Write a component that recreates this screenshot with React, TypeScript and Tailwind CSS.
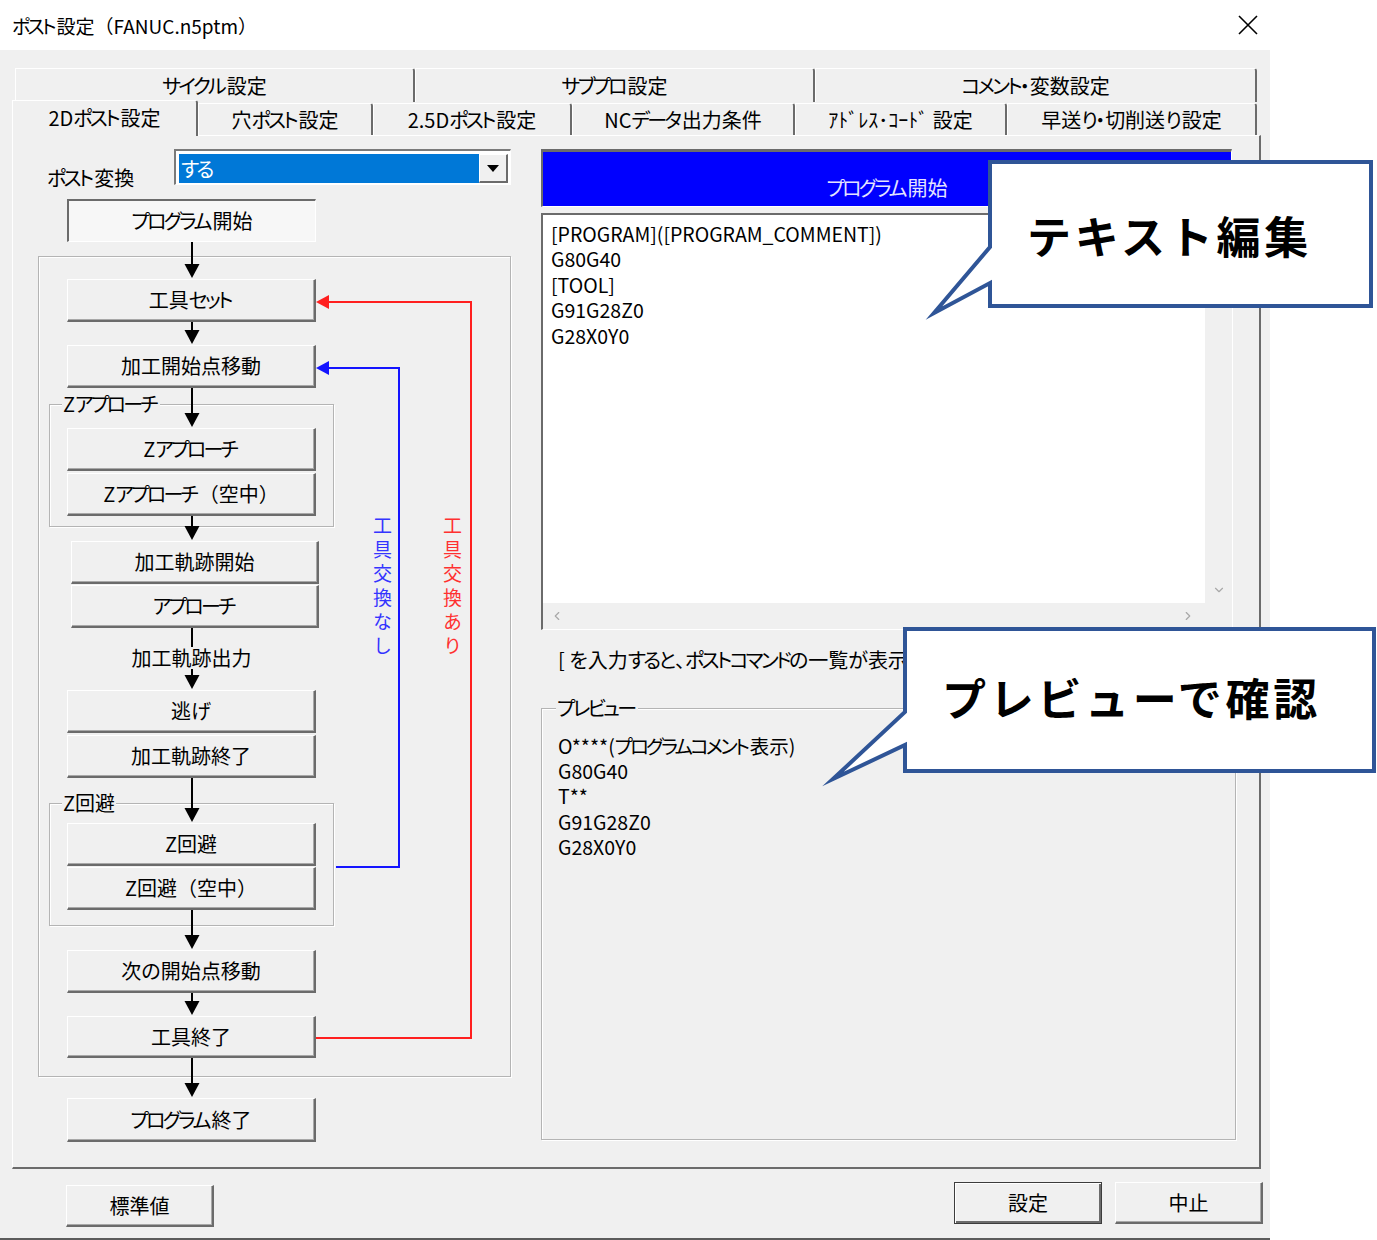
import React from "react";
import { ChevronDown, ChevronLeft, ChevronRight, ChevronUp } from "lucide-react";

/* Narrow the kana runs a little, as the Windows UI font draws them */
function J({ t }: { t: string }) {
  const parts = t.split(/([\u3040-\u30ff]+)/);
  return (
    <>
      {parts.map((p, i) =>
        /^[\u3040-\u30ff]+$/.test(p) ? (
          <span key={i}>
            <span className="tracking-[-2.75px]">{p.slice(0, -1)}</span>
            {p.slice(-1)}
          </span>
        ) : p.includes("（") ? (
          <span key={i} className="[font-feature-settings:normal]">
            {p}
          </span>
        ) : (
          <span key={i}>{p}</span>
        )
      )}
    </>
  );
}

const btnBase =
  "flex items-center justify-center shrink-0 bg-[#f0f0f0] border-t border-l border-t-white border-l-white border-r-2 border-b-2 border-r-[#6b6b6b] border-b-[#6b6b6b] shadow-[inset_-1px_-1px_0_#a8a8a8] text-[20px] leading-none text-black whitespace-nowrap";

function Btn({ className = "", t }: { className?: string; t: string }) {
  return (
    <div className={`${btnBase} ${className}`}>
      <J t={t} />
    </div>
  );
}

function Arrow({ h, className = "" }: { h: number; className?: string }) {
  return (
    <svg width={16} height={h} viewBox={`0 0 16 ${h}`} className={`relative block shrink-0 ${className}`}>
      <rect x={7} y={0} width={2} height={h - 8} fill="#000" />
      <polygon points={`0.5,${h - 15} 15.5,${h - 15} 8,${h - 1}`} fill="#000" />
    </svg>
  );
}

function VLine({ className }: { className: string }) {
  return <div className={`relative w-[2px] bg-black ${className}`} />;
}

function Group({
  label,
  className,
  labelClass,
  children,
}: {
  label: string;
  className: string;
  labelClass: string;
  children: React.ReactNode;
}) {
  return (
    <div className={`relative border border-[#b4b4b4] shadow-[inset_1px_1px_0_#fff,1px_1px_0_#fff] ${className}`}>
      <span className={`absolute -top-[12px] bg-[#f0f0f0] px-[1px] text-[20px] leading-[22px] text-black whitespace-nowrap ${labelClass}`}>
        <J t={label} />
      </span>
      {children}
    </div>
  );
}

const tabBase =
  "flex items-center justify-center shrink-0 bg-[#f0f0f0] border-t border-l border-t-white border-l-white border-r-2 border-r-[#6b6b6b] rounded-tr-[3px] text-[20px] leading-none text-black whitespace-nowrap";

function LeftColumn() {
  return (
    <div className="relative w-[473px] shrink-0 mt-[13px] ml-[25px]">
      {/* post conversion row */}
      <div className="flex items-start h-[36px]">
        <span className="ml-[9px] mt-[18px] text-[20px] leading-[22px]">
          <J t="ポスト変換" />
        </span>
        <div className="ml-auto w-[337px] h-[36px] border-t-2 border-l-2 border-t-[#7a7a7a] border-l-[#7a7a7a] border-b border-r border-b-white border-r-white bg-white pt-[3px] pb-[1px] pl-[3px] pr-[2px] flex">
          <div className="flex-1 bg-[#0078d7] text-white text-[20px] leading-[29px] pl-[2px]">
            <J t="する" />
          </div>
          <div className="w-[29px] h-[29px] flex items-center justify-center bg-[#f0f0f0] border-t border-l border-t-white border-l-white border-r-2 border-b-2 border-r-[#6b6b6b] border-b-[#6b6b6b]">
            <svg width="12" height="7" viewBox="0 0 12 7">
              <polygon points="0,0 12,0 6,7" fill="#000" />
            </svg>
          </div>
        </div>
      </div>

      <div className="ml-[29px] mt-[14px] w-[249px] h-[43px] flex items-center justify-center bg-[#f7f7f7] border-t-2 border-l-2 border-t-[#6b6b6b] border-l-[#6b6b6b] border-b border-r border-b-white border-r-white text-[20px] leading-none">
        <J t="プログラム開始" />
      </div>
      <VLine className="ml-[153px] h-[14px]" />

      <Group label="" labelClass="hidden" className="w-[473px]">
        <Arrow h={23} className="-mt-px ml-[145px]" />
        <Btn className="ml-[28px] w-[249px] h-[43px]" t="工具セット" />
        <Arrow h={23} className="ml-[145px]" />
        <Btn className="ml-[28px] w-[249px] h-[43px]" t="加工開始点移動" />
        <VLine className="ml-[152px] h-[16px]" />

        <Group label="Zアプローチ" labelClass="left-[12px]" className="ml-[10px] w-[285px]">
          <Arrow h={24} className="-mt-px ml-[134px]" />
          <Btn className="ml-[17px] w-[249px] h-[43px]" t="Zアプローチ" />
          <Btn className="ml-[17px] mt-[2px] w-[249px] h-[43px]" t="Zアプローチ（空中）" />
          <VLine className="ml-[141px] h-[10px]" />
        </Group>

        <Arrow h={15} className="-mt-px ml-[145px]" />
        <Btn className="ml-[32px] w-[248px] h-[43px]" t="加工軌跡開始" />
        <Btn className="ml-[32px] mt-[1px] w-[248px] h-[43px]" t="アプローチ" />
        <VLine className="ml-[152px] h-[19px]" />
        <div className="ml-[28px] w-[249px] h-[22px] text-center text-[20px] leading-[22px]">加工軌跡出力</div>
        <Arrow h={21} className="ml-[145px]" />
        <Btn className="ml-[28px] w-[249px] h-[43px]" t="逃げ" />
        <Btn className="ml-[28px] mt-[2px] w-[249px] h-[43px]" t="加工軌跡終了" />
        <VLine className="ml-[152px] h-[25px]" />

        <Group label="Z回避" labelClass="left-[12px]" className="ml-[10px] w-[285px]">
          <Arrow h={20} className="-mt-px ml-[134px]" />
          <Btn className="ml-[17px] w-[249px] h-[43px]" t="Z回避" />
          <Btn className="ml-[17px] mt-[1px] w-[249px] h-[43px]" t="Z回避（空中）" />
          <VLine className="ml-[141px] h-[15px]" />
        </Group>

        <Arrow h={25} className="-mt-px ml-[145px]" />
        <Btn className="ml-[28px] w-[249px] h-[43px]" t="次の開始点移動" />
        <Arrow h={23} className="ml-[145px]" />
        <Btn className="ml-[28px] w-[249px] h-[42px]" t="工具終了" />
        <VLine className="ml-[152px] h-[18px]" />
      </Group>

      <Arrow h={22} className="-mt-px ml-[146px]" />
      <Btn className="ml-[29px] w-[249px] h-[44px]" t="プログラム終了" />

      {/* loop lines (diagram overlay) */}
      <svg className="absolute left-0 top-0 pointer-events-none" width="473" height="1000" viewBox="0 0 473 1000">
        <path d="M278 889 H433 V153 H290" fill="none" stroke="#ff1f1f" strokeWidth="2" />
        <polygon points="278,153 291,146 291,160" fill="#ff1f1f" />
        <path d="M298 718 H361 V219 H290" fill="none" stroke="#1414ff" strokeWidth="2" />
        <polygon points="278,219 291,212 291,226" fill="#1414ff" />
      </svg>
      <div className="absolute left-[334px] top-[367px] [writing-mode:vertical-rl] [text-orientation:upright] text-[19px] leading-[20px] tracking-[5px] text-[#3434ff]">
        工具交換なし
      </div>
      <div className="absolute left-[404px] top-[367px] [writing-mode:vertical-rl] [text-orientation:upright] text-[19px] leading-[20px] tracking-[5px] text-[#ff3030]">
        工具交換あり
      </div>
    </div>
  );
}

function RightColumn() {
  return (
    <div className="w-[695px] shrink-0 mt-[13px] ml-[30px] flex flex-col">
      <div className="w-[691px] h-[58px] border-t-[3px] border-l-2 border-t-[#6b6b6b] border-l-[#6b6b6b] border-b border-r border-b-white border-r-white bg-[#0000ff] flex items-end justify-center pb-[7px]">
        <span className="text-[20px] leading-[22px] text-[#e4e4ff]">
          <J t="プログラム開始" />
        </span>
      </div>

      <div className="mt-[6px] w-[692px] h-[417px] border-t-2 border-l-2 border-t-[#6b6b6b] border-l-[#6b6b6b] border-b border-r border-b-white border-r-white bg-white flex flex-col">
        <div className="flex flex-1 min-h-0">
          <div className="flex-1 pl-[8px] pt-[6px] text-[19.5px] leading-[25.4px] text-black">
            <div>[PROGRAM]([PROGRAM_COMMENT])</div>
            <div>G80G40</div>
            <div>[TOOL]</div>
            <div>G91G28Z0</div>
            <div>G28X0Y0</div>
          </div>
          <div className="w-[27px] bg-[#f0f0f0] flex flex-col justify-between items-center">
            <div className="h-[26px] flex items-center">
              <ChevronUp size={14} strokeWidth={2} color="#a8a8a8" />
            </div>
            <div className="h-[26px] flex items-center">
              <ChevronDown size={14} strokeWidth={2} color="#a8a8a8" />
            </div>
          </div>
        </div>
        <div className="h-[26px] flex bg-[#f0f0f0]">
          <div className="flex-1 flex items-center justify-between pl-[7px] pr-[10px]">
            <ChevronLeft size={14} strokeWidth={2} color="#a8a8a8" />
            <ChevronRight size={14} strokeWidth={2} color="#a8a8a8" />
          </div>
          <div className="w-[27px]" />
        </div>
      </div>

      {/* hint line: its end lies under the callout, as in the screenshot */}
      <div className="mt-[18px] pl-[17px] h-[24px] text-[20px] leading-[24px] whitespace-nowrap">
        <J t="[ を入力すると、ポストコマンドの一覧が表示されます。" />
      </div>

      <Group label="プレビュー" labelClass="left-[14px]" className="mt-[36px] w-[695px] h-[432px]">
        <div className="pl-[16px] pt-[24px] text-[19.5px] leading-[25.2px] text-black">
          <div>
            <J t="O****(プログラムコメント表示)" />
          </div>
          <div>G80G40</div>
          <div>T**</div>
          <div>G91G28Z0</div>
          <div>G28X0Y0</div>
        </div>
      </Group>
    </div>
  );
}

export default function App() {
  return (
    <div className="relative w-[1377px] h-[1240px] overflow-hidden bg-white text-black font-['Noto_Sans_CJK_JP','Noto_Sans',sans-serif] [font-feature-settings:'palt']">
      {/* title bar */}
      <div className="h-[50px] flex items-center justify-between pl-[12px] pr-[119px]">
        <span className="text-[19px] leading-none">
          <J t="ポスト設定" />
          <span className="[font-feature-settings:normal]">（</span>FANUC.n5ptm
          <span className="[font-feature-settings:normal]">）</span>
        </span>
        <svg width="20" height="20" viewBox="0 0 20 20">
          <path d="M1 1 L19 19 M19 1 L1 19" stroke="#000" strokeWidth="1.6" fill="none" />
        </svg>
      </div>

      {/* dialog body */}
      <div className="w-[1270px] h-[1190px] bg-[#f0f0f0] border-b-2 border-b-[#5c5c5c] pt-[18px] pl-[12px]">
        {/* tabs row 1 */}
        <div className="flex ml-[3px] h-[34px]">
          <div className={`${tabBase} w-[400px]`}>
            <J t="サイクル設定" />
          </div>
          <div className={`${tabBase} w-[400px]`}>
            <J t="サブプロ設定" />
          </div>
          <div className={`${tabBase} w-[442px]`}>
            <J t="コメント・変数設定" />
          </div>
        </div>
        {/* tabs row 2 */}
        <div className="relative z-10 flex items-start -mt-[2px] h-[35px]">
          <div className={`${tabBase} w-[186px] h-[36px] pb-[2px]`}>
            <J t="2Dポスト設定" />
          </div>
          <div className={`${tabBase} mt-[3px] w-[175px] h-[32px]`}>
            <J t="穴ポスト設定" />
          </div>
          <div className={`${tabBase} mt-[3px] w-[199px] h-[32px]`}>
            <J t="2.5Dポスト設定" />
          </div>
          <div className={`${tabBase} mt-[3px] w-[223px] h-[32px]`}>
            <J t="NCデータ出力条件" />
          </div>
          <div className={`${tabBase} mt-[3px] w-[212px] h-[32px]`}>ｱﾄﾞﾚｽ･ｺｰﾄﾞ 設定</div>
          <div className={`${tabBase} mt-[3px] w-[250px] h-[32px]`}>
            <J t="早送り・切削送り設定" />
          </div>
        </div>

        {/* panel */}
        <div className="w-[1249px] h-[1034px] bg-[#f0f0f0] border-t border-l border-t-white border-l-white border-r-2 border-b-2 border-r-[#6b6b6b] border-b-[#6b6b6b] flex items-start">
          <LeftColumn />
          <RightColumn />
        </div>

        {/* bottom buttons */}
        <div className="flex items-start w-[1251px]">
          <Btn className="ml-[54px] mt-[16px] w-[148px] h-[42px]" t="標準値" />
          <div className="flex-1" />
          <div className="mt-[13px] w-[148px] h-[42px] flex items-center justify-center bg-[#f0f0f0] border border-[#3c3c3c] shadow-[inset_1px_1px_0_#fff,inset_-2px_-2px_0_#6b6b6b] text-[20px] leading-none">
            設定
          </div>
          <Btn className="ml-[13px] mt-[13px] w-[148px] h-[42px]" t="中止" />
        </div>
      </div>

      {/* callouts */}
      <svg className="absolute left-0 top-0 pointer-events-none" width="1377" height="1240" viewBox="0 0 1377 1240">
        <path
          d="M990 162 H1371 V306 H990 V283 L934 313 L990 247 Z"
          fill="#fff"
          stroke="#2f5597"
          strokeWidth="4"
          strokeLinejoin="miter"
          strokeMiterlimit="10"
        />
        <path
          d="M905 629 H1374 V771 H905 V745 L833 779 L905 712 Z"
          fill="#fff"
          stroke="#2f5597"
          strokeWidth="4"
          strokeLinejoin="miter"
          strokeMiterlimit="10"
        />
      </svg>
      <div className="absolute left-[1027px] top-[208px] text-[44px] font-bold leading-[54px] tracking-[3.7px] [font-feature-settings:normal] whitespace-nowrap">
        テキスト編集
      </div>
      <div className="absolute left-[942px] top-[670px] text-[44px] font-bold leading-[54px] tracking-[3.7px] [font-feature-settings:normal] whitespace-nowrap">
        プレビューで確認
      </div>
    </div>
  );
}
